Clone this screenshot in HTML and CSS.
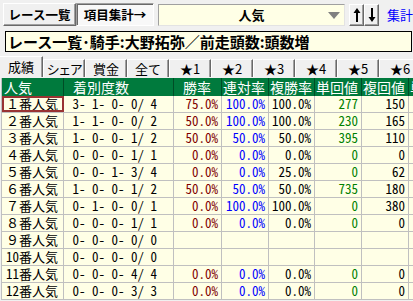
FILE: index.html
```html
<!DOCTYPE html>
<html>
<head>
	<meta charset="utf-8">
	<title>項目集計</title>
	<link rel="stylesheet" href="styles.css">
</head>
<body>
	<div class="toolbar">
		<button class="btn btn_list">レース一覧</button>
		<button class="btn btn_sum">項目集計→</button>
		<div class="combo">
			<span class="combo_text">人気</span>
			<span class="combo_arrow"></span>
		</div>
		<button class="btn btn_arrow btn_up">
			<svg width="8" height="16" viewBox="0 0 8 16"><path d="M4 1 L7.5 6 L5 6 L5 15 L3 15 L3 6 L0.5 6 Z" fill="#000"/></svg>
		</button>
		<button class="btn btn_arrow">
			<svg width="8" height="16" viewBox="0 0 8 16"><path d="M4 15 L7.5 10 L5 10 L5 1 L3 1 L3 10 L0.5 10 Z" fill="#000"/></svg>
		</button>
		<span class="link">集計表</span>
	</div>

	<div class="title">レース一覧･騎手:大野拓弥／前走頭数:頭数増</div>

	<div class="tabs">
		<div class="tab selected">成績</div>
		<div class="tab narrow">シェア</div>
		<div class="tab">賞金</div>
		<div class="tab">全て</div>
		<div class="tab">★1</div>
		<div class="tab">★2</div>
		<div class="tab">★3</div>
		<div class="tab">★4</div>
		<div class="tab">★5</div>
		<div class="tab">★6</div>
	</div>

	<div class="grid">
		<div class="row head">
			<div class="c c1">人気</div>
			<div class="c c2 indent">着別度数</div>
			<div class="c c3 indent">勝率</div>
			<div class="c c4">連対率</div>
			<div class="c c5">複勝率</div>
			<div class="c c6">単回値</div>
			<div class="c c7">複回値</div>
			<div class="c c8">単</div>
		</div>
		<div class="row">
			<div class="c c1 current">１番人気</div>
			<div class="c c2"> 3- 1- 0- 0/ 4</div>
			<div class="c c3 win">75.0%</div>
			<div class="c c4 ren">100.0%</div>
			<div class="c c5">100.0%</div>
			<div class="c c6 tan">277</div>
			<div class="c c7">150</div>
			<div class="c c8"></div>
		</div>
		<div class="row">
			<div class="c c1">２番人気</div>
			<div class="c c2"> 1- 1- 0- 0/ 2</div>
			<div class="c c3 win">50.0%</div>
			<div class="c c4 ren">100.0%</div>
			<div class="c c5">100.0%</div>
			<div class="c c6 tan">230</div>
			<div class="c c7">165</div>
			<div class="c c8"></div>
		</div>
		<div class="row">
			<div class="c c1">３番人気</div>
			<div class="c c2"> 1- 0- 0- 1/ 2</div>
			<div class="c c3 win">50.0%</div>
			<div class="c c4 ren">50.0%</div>
			<div class="c c5">50.0%</div>
			<div class="c c6 tan">395</div>
			<div class="c c7">110</div>
			<div class="c c8"></div>
		</div>
		<div class="row">
			<div class="c c1">４番人気</div>
			<div class="c c2"> 0- 0- 0- 1/ 1</div>
			<div class="c c3 win">0.0%</div>
			<div class="c c4 ren">0.0%</div>
			<div class="c c5">0.0%</div>
			<div class="c c6 tan">0</div>
			<div class="c c7">0</div>
			<div class="c c8"></div>
		</div>
		<div class="row">
			<div class="c c1">５番人気</div>
			<div class="c c2"> 0- 0- 1- 3/ 4</div>
			<div class="c c3 win">0.0%</div>
			<div class="c c4 ren">0.0%</div>
			<div class="c c5">25.0%</div>
			<div class="c c6 tan">0</div>
			<div class="c c7">62</div>
			<div class="c c8"></div>
		</div>
		<div class="row">
			<div class="c c1">６番人気</div>
			<div class="c c2"> 1- 0- 0- 1/ 2</div>
			<div class="c c3 win">50.0%</div>
			<div class="c c4 ren">50.0%</div>
			<div class="c c5">50.0%</div>
			<div class="c c6 tan">735</div>
			<div class="c c7">180</div>
			<div class="c c8"></div>
		</div>
		<div class="row">
			<div class="c c1">７番人気</div>
			<div class="c c2"> 0- 1- 0- 0/ 1</div>
			<div class="c c3 win">0.0%</div>
			<div class="c c4 ren">100.0%</div>
			<div class="c c5">100.0%</div>
			<div class="c c6 tan">0</div>
			<div class="c c7">380</div>
			<div class="c c8"></div>
		</div>
		<div class="row">
			<div class="c c1">８番人気</div>
			<div class="c c2"> 0- 0- 0- 1/ 1</div>
			<div class="c c3 win">0.0%</div>
			<div class="c c4 ren">0.0%</div>
			<div class="c c5">0.0%</div>
			<div class="c c6 tan">0</div>
			<div class="c c7">0</div>
			<div class="c c8"></div>
		</div>
		<div class="row">
			<div class="c c1">９番人気</div>
			<div class="c c2"> 0- 0- 0- 0/ 0</div>
			<div class="c c3"></div>
			<div class="c c4"></div>
			<div class="c c5"></div>
			<div class="c c6"></div>
			<div class="c c7"></div>
			<div class="c c8"></div>
		</div>
		<div class="row">
			<div class="c c1">10番人気</div>
			<div class="c c2"> 0- 0- 0- 0/ 0</div>
			<div class="c c3"></div>
			<div class="c c4"></div>
			<div class="c c5"></div>
			<div class="c c6"></div>
			<div class="c c7"></div>
			<div class="c c8"></div>
		</div>
		<div class="row">
			<div class="c c1">11番人気</div>
			<div class="c c2"> 0- 0- 0- 4/ 4</div>
			<div class="c c3 win">0.0%</div>
			<div class="c c4 ren">0.0%</div>
			<div class="c c5">0.0%</div>
			<div class="c c6 tan">0</div>
			<div class="c c7">0</div>
			<div class="c c8"></div>
		</div>
		<div class="row">
			<div class="c c1">12番人気</div>
			<div class="c c2"> 0- 0- 0- 3/ 3</div>
			<div class="c c3 win">0.0%</div>
			<div class="c c4 ren">0.0%</div>
			<div class="c c5">0.0%</div>
			<div class="c c6 tan">0</div>
			<div class="c c7">0</div>
			<div class="c c8"></div>
		</div>
	</div>
</body>
</html>
```

FILE: styles.css
```css
body,html{
	margin: 0;
	padding: 0;
}
body{
	width: 413px;
	height: 301px;
	overflow: hidden;
	background-color: #f0f0f0;
	font-family: "Noto Sans CJK JP", sans-serif;
	color: #000;
}
*{
	box-sizing: border-box;
}

/* top bar */
.toolbar{
	display: flex;
	align-items: center;
	width: 440px;
	height: 29px;
	padding-left: 3px;
	white-space: nowrap;
}
.toolbar > *{
	flex: none;
}
.btn{
	height: 23px;
	margin: 0;
	padding: 0;
	font: bold 12.5px "Noto Sans CJK JP", sans-serif;
	color: #000;
	background-color: #f0f0f0;
	border: 1px solid;
	border-color: #fff #696969 #696969 #fff;
	box-shadow: inset -1px -1px #a0a0a0;
}
.btn_list{
	width: 73px;
}
.btn_sum{
	width: 78px;
	background-color: #f8f8f8;
	border-color: #a0a0a0 #fff #fff #a0a0a0;
	box-shadow: inset 1px 1px #696969;
}
.combo{
	display: flex;
	align-items: center;
	justify-content: center;
	position: relative;
	width: 187px;
	height: 22px;
	margin-left: 4px;
	background-color: #ffffe6;
	border: 1px solid;
	border-color: #a0a0a0 #e3e3e3 #e3e3e3 #a0a0a0;
	font-weight: bold;
	font-size: 13px;
}
.combo_arrow{
	position: absolute;
	right: 4px;
	top: 7px;
	width: 0;
	height: 0;
	border-left: 6px solid transparent;
	border-right: 6px solid transparent;
	border-top: 7px solid #808080;
}
.btn_arrow{
	width: 15px;
	height: 22px;
	display: flex;
	align-items: center;
	justify-content: center;
}
.btn_up{
	margin-left: 4px;
}
.link{
	margin-left: 8px;
	color: #0000ff;
	font-size: 13px;
}

/* title */
.title{
	height: 21px;
	margin: 2px 1px 0 5px;
	padding-left: 2px;
	background-color: #ffffe6;
	border: 1px solid #000;
	font-weight: bold;
	font-size: 15px;
	line-height: 19px;
	white-space: nowrap;
	overflow: hidden;
}

/* tabs */
.tabs{
	display: flex;
	align-items: flex-end;
	width: 440px;
	height: 22px;
	margin-top: 3px;
	white-space: nowrap;
}
.tab{
	flex: none;
	width: 42px;
	height: 18px;
	text-align: center;
	font-size: 13px;
	line-height: 17px;
	border-top: 1px solid #fff;
	border-left: 1px solid #fff;
	border-right: 1px solid #696969;
	box-shadow: inset -1px 0 #a0a0a0;
}
.tab.narrow{
	letter-spacing: -1.5px;
}
.tab.selected{
	width: 43px;
	height: 21px;
	line-height: 19px;
	border-left: none;
}

/* grid */
.grid{
	margin-top: 1px;
	margin-left: 1px;
	border-left: 1px solid #c0c0c0;
	width: 480px;
	font-family: "Noto Sans Mono CJK JP", "Noto Sans CJK JP", monospace;
	font-size: 13px;
}
.row{
	display: flex;
	height: 17px;
	background-color: #ffffe6;
	border-bottom: 1px solid #c0c0c0;
}
.c{
	flex: none;
	height: 100%;
	line-height: 16px;
	white-space: pre;
	border-right: 1px solid #c0c0c0;
	text-align: right;
	padding-right: 3px;
}
.c1{ width: 62px; text-align: left; padding-left: 4px; }
.c2{ width: 110px; text-align: left; padding-left: 2px; }
.c3{ width: 48px; }
.c4{ width: 47px; }
.c5{ width: 46px; }
.c6{ width: 47px; }
.c7{ width: 47px; }
.c8{ width: 60px; border-right: none; }

.row.head{
	height: 18px;
	background-color: #007a3d;
	border-bottom: none;
	color: #fff;
	font-family: "Noto Sans CJK JP", sans-serif;
	font-size: 14px;
}
.head .c{
	text-align: left;
	padding: 0 0 0 1px;
	line-height: 18px;
	border-right-color: #004d26;
}
.head .c1{ padding-left: 2px; }
.head .indent{ padding-left: 9px; }

.current{
	outline: 2px solid #993333;
	outline-offset: -2px;
}
.win{ color: #800000; }
.ren{ color: #0000ff; }
.tan{ color: #008000; }
```
